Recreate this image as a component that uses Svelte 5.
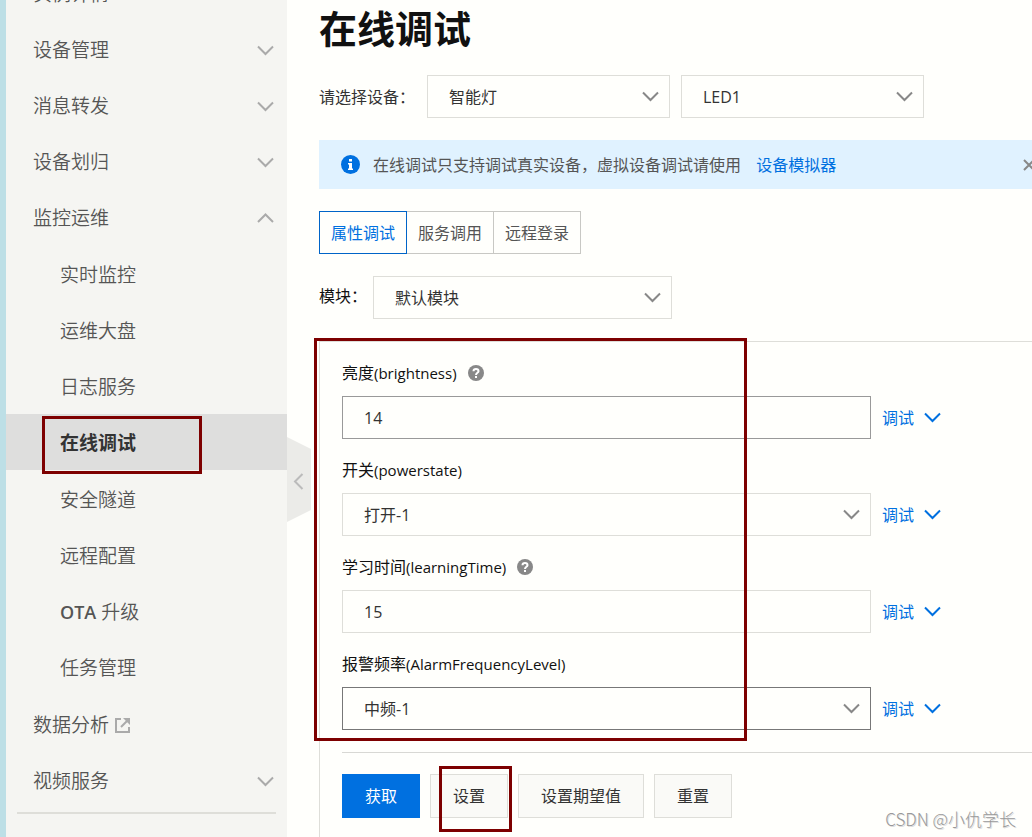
<style>
:global(body) {
    margin: 0;
    background-color: #fffffc;
}

.page {
    position: relative;
    display: flex;
    min-height: 100vh;
    box-sizing: border-box;
    overflow: hidden;
    border-left: 6px solid #bddfe6;
    font-family: "Open Sans", "Noto Sans CJK SC", sans-serif;
    font-size: 16px;
    line-height: 24px;
    color: #333;
}

a {
    color: #0070e0;
    text-decoration: none;
}

button, input, select {
    box-sizing: border-box;
    margin: 0;
    border-radius: 0;
    font: inherit;
    color: inherit;
}

svg {
    display: block;
    flex: none;
    fill: none;
}

/* sidebar */
.sidebar {
    position: relative;
    flex: 0 0 281px;
    background-color: #f5f5f2;
    font-size: 19px;
    font-weight: 350;
}

.sidebar nav {
    margin-top: -34px;
}

.sidebar ul {
    margin: 0;
    padding: 0;
    list-style: none;
}

.sidebar .children {
    padding-bottom: 2px;
}

.item {
    display: flex;
    align-items: center;
    gap: 6px;
    width: 100%;
    height: 56px;
    padding: 0 13px 0 27px;
    box-sizing: border-box;
    border: none;
    background: none;
    color: #555;
    text-align: left;
}

.item .arrow {
    margin-left: auto;
    stroke: #aaa;
}

.children .item {
    padding-top: 2px;
    padding-left: 54px;
}

.children .item.active {
    margin-bottom: 1px;
    background-color: #dededd;
    font-weight: bold;
    color: #333;
}

.latin {
    font-size: 18px;
    font-weight: 600;
}

.sidebar hr {
    height: 2px;
    margin: 3px 11px 22px;
    border: none;
    background-color: #deded9;
}

.collapse {
    position: absolute;
    top: 437px;
    left: 100%;
    display: flex;
    align-items: center;
    width: 24px;
    height: 85px;
    padding: 4px 0 0 6px;
    border: none;
    background-color: #ebebe8;
    clip-path: polygon(0 0, 100% 14%, 100% 86%, 0 100%);
    stroke: #bbb;
}

/* content */
.content {
    display: flex;
    flex-direction: column;
    flex: 1;
    min-width: 0;
    margin-right: -16px;
    padding-left: 32px;
}

h1 {
    margin: 0;
    padding-bottom: 19px;
    font-size: 38px;
    line-height: 56px;
    color: #111;
}

.row {
    display: flex;
    align-items: center;
}

.devices {
    gap: 11px;
}

.devices label {
    width: 97px;
}

.module label {
    width: 54px;
    padding-bottom: 4px;
    color: #111;
}

.select {
    display: grid;
    align-items: center;
    width: 243px;
}

.module .select {
    width: 299px;
}

.select select, .select svg {
    grid-area: 1 / 1;
}

.select svg {
    justify-self: end;
    margin-right: 11px;
    stroke: #888;
    pointer-events: none;
}

select, input {
    width: 100%;
    height: 43px;
    padding: 0 21px;
    border: 1px solid #deded9;
    background-color: transparent;
    appearance: none;
}

.notice {
    display: flex;
    align-items: center;
    height: 49px;
    margin: 22px 0;
    padding: 0 13px 0 22px;
    background-color: #e0f2ff;
    color: #555;
}

.notice p {
    margin: 0 0 0 13px;
}

.notice p a {
    margin-left: 11px;
}

.close {
    display: flex;
    margin-left: auto;
    padding: 0;
    border: none;
    background: none;
    stroke: #888;
}

.tabs {
    display: flex;
    margin-bottom: 22px;
}

.tabs button {
    height: 43px;
    margin-right: -1px;
    padding: 0 11px;
    border: 1px solid #c8c8c4;
    background: none;
    color: #555;
}

.tabs button.active {
    position: relative;
    border-color: #0064c8;
    color: #0070e0;
}

.panel {
    flex: 1;
    margin-top: 22px;
    padding: 19px 0 19px 22px;
    border: 1px solid #deded9;
    border-bottom: none;
}

.field {
    margin-bottom: 19px;
}

.caption {
    display: flex;
    align-items: center;
    gap: 11px;
    margin-bottom: 11px;
    color: #111;
}

.key {
    font-size: 15px;
}

.field .row {
    gap: 11px;
}

.control, .control .select {
    width: 529px;
}

.control .middle {
    border-color: #999;
}

.control .strong {
    border-color: #777;
}

.debug {
    display: flex;
    align-items: center;
    gap: 10px;
    stroke: #0070e0;
}

.actions {
    display: flex;
    gap: 10px;
    margin-top: 22px;
    padding-top: 21px;
    border-top: 1px solid #d8d8d4;
}

.actions button {
    height: 44px;
    padding: 0 22px;
    border: 1px solid #deded9;
    background-color: #fafaf7;
}

.actions .primary {
    border-color: #0070e0;
    background-color: #0070e0;
    color: white;
}

/* red marks drawn over the page */
.mark {
    position: absolute;
    box-sizing: border-box;
    border: 3px solid #7d0000;
    pointer-events: none;
}

.mark.menu {
    top: 416px;
    left: 36px;
    width: 160px;
    height: 58px;
}

.mark.fields {
    top: 338px;
    left: 308px;
    width: 433px;
    height: 403px;
}

.mark.set {
    top: 766px;
    left: 433px;
    width: 73px;
    height: 66px;
}

.watermark {
    position: absolute;
    right: 16px;
    bottom: 6px;
    font-family: "Noto Sans CJK SC", sans-serif;
    font-size: 17px;
    font-weight: 300;
    color: #999;
    text-shadow: 1px 1px 0 #ddd;
}
</style>

<script lang="ts">
    const before = ['实例详情', '设备管理', '消息转发', '设备划归']
    const children = ['实时监控', '运维大盘', '日志服务', '在线调试', '安全隧道', '远程配置', 'OTA 升级', '任务管理']
    const tabs = ['属性调试', '服务调用', '远程登录']

    const fields = [
        { id: 'brightness', name: '亮度', value: '14', help: true, select: false, tone: 'middle' },
        { id: 'powerstate', name: '开关', value: '打开-1', help: false, select: true, tone: '' },
        { id: 'learningTime', name: '学习时间', value: '15', help: true, select: false, tone: '' },
        { id: 'AlarmFrequencyLevel', name: '报警频率', value: '中频-1', help: false, select: true, tone: 'strong' }
    ]

    let current = $state('在线调试')
    let tab = $state('属性调试')
</script>

{#snippet chevron(up = false)}
    <svg class="arrow" width="17" height="11" viewBox="0 0 17 11" stroke-width="2" aria-hidden="true">
        <path d={up ? 'M1 9 8.5 1.5 16 9' : 'M1 1.5 8.5 9 16 1.5'} />
    </svg>
{/snippet}

{#snippet dropdown(id: string, value: string, tone = '', label = '')}
    <div class="select">
        <select {id} class={tone} aria-label={label || null}>
            <option>{value}</option>
        </select>
        {@render chevron()}
    </div>
{/snippet}

<div class="page">
    <aside class="sidebar">
        <nav>
            <ul>
                {#each before as name}
                    <li><button class="item">{name}{@render chevron()}</button></li>
                {/each}
                <li>
                    <button class="item" aria-expanded="true">监控运维{@render chevron(true)}</button>
                    <ul class="children">
                        {#each children as name}
                            <li>
                                <a class="item" class:active={name === current} href="#{name}" onclick={() => current = name}>
                                    {#if name.startsWith('OTA')}
                                        <span><span class="latin">OTA</span> 升级</span>
                                    {:else}
                                        {name}
                                    {/if}
                                </a>
                            </li>
                        {/each}
                    </ul>
                </li>
                <li>
                    <a class="item" href="#data">
                        数据分析
                        <svg width="15" height="15" viewBox="0 0 15 15" stroke="#aaa" stroke-width="2" aria-hidden="true">
                            <path d="M6 1H1V14H14V9M6 9 12 3" />
                            <path d="M8 0H15V7Z" fill="#aaa" stroke="none" />
                        </svg>
                    </a>
                </li>
                <li><button class="item">视频服务{@render chevron()}</button></li>
            </ul>
            <hr>
        </nav>
        <button class="collapse" aria-label="收起">
            <svg width="11" height="17" viewBox="0 0 11 17" stroke-width="2" aria-hidden="true">
                <path d="M9.5 1 2 8.5 9.5 16" />
            </svg>
        </button>
    </aside>

    <main class="content">
        <h1>在线调试</h1>

        <div class="row devices">
            <label for="product">请选择设备：</label>
            {@render dropdown('product', '智能灯')}
            {@render dropdown('device', 'LED1', '', '设备')}
        </div>

        <div class="notice">
            <svg width="19" height="19" viewBox="0 0 19 19" aria-hidden="true">
                <circle cx="9.5" cy="9.5" r="9.5" fill="#0070e0" />
                <path d="M8 4H11V6.500H8ZM7 8H11V13.500H12V15H7V13.500H8V9.500H7Z" fill="#fff" />
            </svg>
            <p>在线调试只支持调试真实设备，虚拟设备调试请使用 <a href="#simulator">设备模拟器</a></p>
            <button class="close" aria-label="关闭">
                <svg width="12" height="12" viewBox="0 0 12 12" stroke-width="2" aria-hidden="true">
                    <path d="M1 1 11 11M11 1 1 11" />
                </svg>
            </button>
        </div>

        <div class="tabs">
            {#each tabs as name}
                <button class:active={name === tab} onclick={() => tab = name}>{name}</button>
            {/each}
        </div>

        <div class="row module">
            <label for="module">模块：</label>
            {@render dropdown('module', '默认模块')}
        </div>

        <section class="panel">
            {#each fields as field}
                <div class="field">
                    <div class="caption">
                        <label for={field.id}>{field.name}<span class="key">({field.id})</span></label>
                        {#if field.help}
                            <svg width="16" height="16" viewBox="0 0 16 16" aria-hidden="true">
                                <circle cx="8" cy="8" r="8" fill="#888" />
                                <path d="M5.500 6.200C5.500 3.200 10.500 3.200 10.500 6.200C10.500 7.800 8 7.800 8 10M8 11V13" stroke="#fff" stroke-width="2" />
                            </svg>
                        {/if}
                    </div>
                    <div class="row">
                        <div class="control">
                            {#if field.select}
                                {@render dropdown(field.id, field.value, field.tone)}
                            {:else}
                                <input id={field.id} class={field.tone} type="text" value={field.value}>
                            {/if}
                        </div>
                        <a class="debug" href="#debug">调试{@render chevron()}</a>
                    </div>
                </div>
            {/each}

            <div class="actions">
                <button class="primary">获取</button>
                <button>设置</button>
                <button>设置期望值</button>
                <button>重置</button>
            </div>
        </section>
    </main>

    <div class="mark menu"></div>
    <div class="mark fields"></div>
    <div class="mark set"></div>
    <div class="watermark">CSDN @小仇学长</div>
</div>
